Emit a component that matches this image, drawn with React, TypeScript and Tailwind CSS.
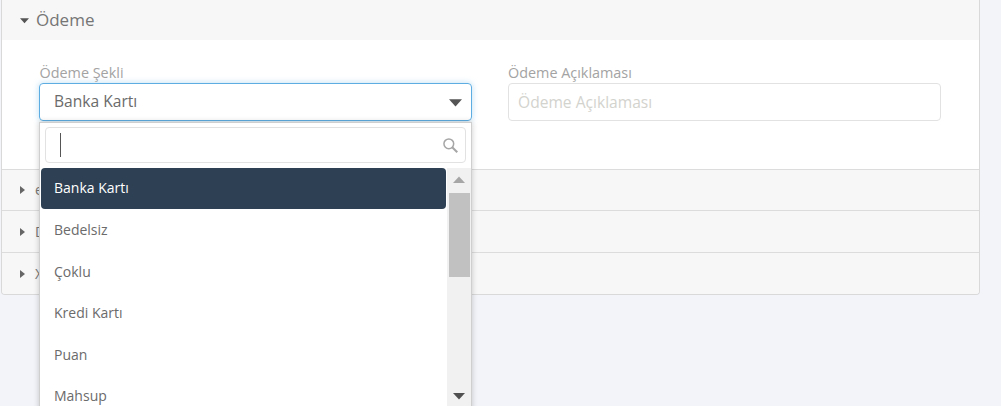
const options = ["Banka Kartı", "Bedelsiz", "Çoklu", "Kredi Kartı", "Puan", "Mahsup"];
const rows = [
  { label: "e", height: "h-[41px]" },
  { label: "D", height: "h-[42px]" },
  { label: "X", height: "h-[42px]" },
];

function Caret({ className }: { className: string }) {
  return (
    <svg className={className} viewBox="0 0 10 10">
      <path d="M0 2.5h10L5 8z" fill="currentColor" />
    </svg>
  );
}

function Search() {
  return (
    <svg className="h-[15px] w-[15px] text-[#a6a6a6]" viewBox="0 0 16 16" fill="none" stroke="currentColor">
      <circle cx="6.2" cy="6.2" r="5.2" strokeWidth="1.6" />
      <path d="M9.8 9.8l5.4 5.4" strokeWidth="2.2" />
    </svg>
  );
}

export default function App() {
  return (
    <div className="relative h-[406px] w-[1001px] overflow-hidden bg-[#f3f4f9] font-['Open_Sans',sans-serif]">
      <div className="ml-px w-[979px] overflow-hidden rounded-b border-x border-b border-[#d9d9d9]">
        <div className="flex h-10 items-center gap-[7px] bg-[#f7f7f7] pl-[18px] text-[17px] text-[#757575]">
          <Caret className="h-[9px] w-[9px] text-[#555]" />
          <span>Ödeme</span>
        </div>
        <div className="flex h-[129px] gap-9 bg-white pl-[37px] pt-[23px]">
          <div className="w-[433px]">
            <label className="block h-[20px] pl-[0.5px] text-[14.4px] leading-[19px] text-[#a3a3a3]">Ödeme Şekli</label>
            <div className="flex h-[38px] items-center justify-between rounded-sm border border-[#5dade2] pl-[14px] pr-[9px] text-[15.6px] text-[#6b6b6b] shadow-[0_0_6px_rgba(93,173,226,0.4)]">
              <span>Banka Kartı</span>
              <Caret className="h-[13px] w-[13px] text-[#555]" />
            </div>
          </div>
          <div className="w-[433px]">
            <label className="block h-[20px] text-[14.4px] leading-[19px] text-[#a3a3a3]">Ödeme Açıklaması</label>
            <div className="flex h-[38px] items-center rounded-sm border border-[#e2e2e2] pl-[9px] pt-px text-[15.6px] text-[#d3d3ce]">
              Ödeme Açıklaması
            </div>
          </div>
        </div>
        {rows.map((row) => (
          <div
            key={row.label}
            className={`flex ${row.height} items-center gap-[10px] border-t border-[#dcdcdc] bg-[#f7f7f7] pl-[18px] text-sm text-[#777]`}
          >
            <svg className="h-[8px] w-[5px] text-[#666]" viewBox="0 0 5 8">
              <path d="M0 0l5 4-5 4z" fill="currentColor" />
            </svg>
            <span>{row.label}</span>
          </div>
        ))}
      </div>

      <div className="absolute left-[39px] top-[122px] h-[290px] w-[433px] border border-[#cfcfcf] bg-white shadow-[0_0_6px_rgba(0,0,0,0.2)]">
        <div className="mx-[5px] mt-[4px] flex h-[36px] items-center justify-between rounded-sm border border-[#e2e2e2] pl-[14px] pr-[7px]">
          <span className="h-[24px] w-px bg-[#555]" />
          <Search />
        </div>
        <div className="mt-[5px] flex">
          <div className="ml-px w-[405px]">
            {options.map((option, i) => (
              <div
                key={option}
                className={
                  i === 0
                    ? "flex h-[41px] items-center rounded-sm bg-[#2e4053] pb-[2px] pl-[13px] text-[14px] font-medium text-white"
                    : "flex h-[41.5px] items-center pl-[13px] text-[14px] text-[#6b6b6b]"
                }
              >
                {option}
              </div>
            ))}
          </div>
          <div className="ml-px flex h-[238px] w-[24px] flex-col items-center bg-[#f1f1f1] pt-[6px]">
            <Caret className="h-[12px] w-[12px] rotate-180 text-[#a6a6a6]" />
            <div className="mt-[7px] h-[84px] w-[21px] bg-[#c1c1c1]" />
            <Caret className="mt-[113px] h-[12px] w-[12px] text-[#505050]" />
          </div>
        </div>
      </div>
    </div>
  );
}
